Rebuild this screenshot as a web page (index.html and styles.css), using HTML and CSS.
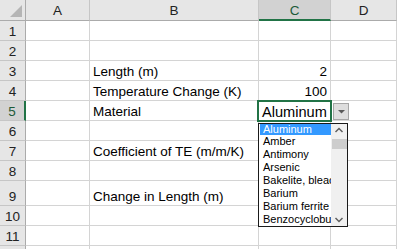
FILE: index.html
```html
<!DOCTYPE html>
<html lang="en">
<head>
  <meta charset="UTF-8">
  <title>Thermal Expansion</title>
  <link rel="stylesheet" href="styles.css">
</head>
<body>
  <div class="sheet">
    <div class="grid">
      <!-- header row -->
      <div class="corner"><span class="corner-tri"></span></div>
      <div class="col-head">A</div>
      <div class="col-head">B</div>
      <div class="col-head active">C</div>
      <div class="col-head">D</div>

      <div class="row-head">1</div><div class="cell"></div><div class="cell"></div><div class="cell"></div><div class="cell"></div>
      <div class="row-head">2</div><div class="cell"></div><div class="cell"></div><div class="cell"></div><div class="cell"></div>
      <div class="row-head">3</div><div class="cell"></div><div class="cell">Length (m)</div><div class="cell num">2</div><div class="cell"></div>
      <div class="row-head">4</div><div class="cell"></div><div class="cell">Temperature Change (K)</div><div class="cell num">100</div><div class="cell"></div>
      <div class="row-head active">5</div><div class="cell"></div><div class="cell">Material</div><div class="cell big">Aluminum</div><div class="cell"></div>
      <div class="row-head">6</div><div class="cell"></div><div class="cell"></div><div class="cell"></div><div class="cell"></div>
      <div class="row-head">7</div><div class="cell"></div><div class="cell">Coefficient of TE (m/m/K)</div><div class="cell"></div><div class="cell"></div>
      <div class="row-head">8</div><div class="cell"></div><div class="cell"></div><div class="cell"></div><div class="cell"></div>
      <div class="row-head">9</div><div class="cell"></div><div class="cell">Change in Length (m)</div><div class="cell"></div><div class="cell"></div>
      <div class="row-head">10</div><div class="cell"></div><div class="cell"></div><div class="cell"></div><div class="cell"></div>
      <div class="row-head">11</div><div class="cell"></div><div class="cell"></div><div class="cell"></div><div class="cell"></div>
      <div class="row-head"></div><div class="cell"></div><div class="cell"></div><div class="cell"></div><div class="cell"></div>
    </div>

    <!-- selected cell C5 with its validation dropdown -->
    <div class="selection"></div>
    <div class="drop-btn">
      <svg width="7" height="4" viewBox="0 0 7 4"><polygon points="0,0 7,0 3.5,3.5" fill="#595959"/></svg>
    </div>
    <div class="listbox">
      <ul class="options">
        <li class="selected">Aluminum</li>
        <li>Amber</li>
        <li>Antimony</li>
        <li>Arsenic</li>
        <li>Bakelite, bleached</li>
        <li>Barium</li>
        <li>Barium ferrite</li>
        <li>Benzocyclobutene</li>
      </ul>
      <div class="scrollbar">
        <svg class="arrow" width="16" height="10" viewBox="0 0 16 10"><polyline points="4.5,7 8,3.5 11.5,7" fill="none" stroke="#606060" stroke-width="1.5"/></svg>
        <div class="thumb"></div>
        <svg class="arrow down" width="16" height="10" viewBox="0 0 16 10"><polyline points="4.5,3 8,6.5 11.5,3" fill="none" stroke="#606060" stroke-width="1.5"/></svg>
      </div>
    </div>
  </div>
</body>
</html>
```

FILE: styles.css
```css
body {
  margin: 0;
  background: #ffffff;
  font-family: 'Liberation Sans', Arial, sans-serif;
  color: #000;
}
.sheet {
  position: relative;
  width: 397px;
  height: 249px;
  overflow: hidden;
}
.grid {
  display: grid;
  grid-template-columns: 26px 64px 169px 72px 66px;
  grid-template-rows: 21px repeat(8, 20px) 25px 20px 20px 20px;
}
.grid > div {
  box-sizing: border-box;
  border-right: 1px solid #d4d4d4;
  border-bottom: 1px solid #d4d4d4;
}
.corner {
  position: relative;
  background: #e6e6e6;
  border-right-color: #ababab !important;
  border-bottom-color: #ababab !important;
}
.corner-tri {
  position: absolute;
  right: 3px;
  bottom: 3px;
  width: 0;
  height: 0;
  border-left: 12px solid transparent;
  border-bottom: 12px solid #b5b5b5;
}
.col-head {
  background: #e6e6e6;
  border-right-color: #c6c6c6 !important;
  border-bottom-color: #ababab !important;
  font-size: 13.5px;
  color: #222;
  display: flex;
  align-items: center;
  justify-content: center;
  padding-top: 1px;
}
.col-head.active {
  background: #d2d2d2;
  color: #1d5a38;
  border-bottom: 2px solid #217346 !important;
}
.row-head {
  background: #e6e6e6;
  border-right-color: #ababab !important;
  border-bottom-color: #c6c6c6 !important;
  font-size: 13.5px;
  color: #222;
  display: flex;
  align-items: flex-end;
  justify-content: center;
  padding-bottom: 1px;
}
.row-head.active {
  background: #d2d2d2;
  color: #1d5a38;
  border-right: 2px solid #217346 !important;
}
.cell {
  font-size: 13.5px;
  display: flex;
  align-items: flex-end;
  padding: 0 3px 1px;
  white-space: nowrap;
  overflow: visible;
}
.cell.num {
  justify-content: flex-end;
}
.cell.big {
  font-size: 14.6px;
  padding-left: 3px;
  padding-bottom: 0;
}
.selection {
  position: absolute;
  left: 257px;
  top: 100px;
  width: 75px;
  height: 22px;
  box-sizing: border-box;
  border: 2px solid #217346;
}
.drop-btn {
  position: absolute;
  left: 333px;
  top: 103px;
  width: 16px;
  height: 17px;
  box-sizing: border-box;
  background: #dedede;
  border: 1px solid #a6a6a6;
  display: flex;
  align-items: center;
  justify-content: center;
}
.listbox {
  position: absolute;
  left: 258px;
  top: 123px;
  width: 90px;
  height: 104px;
  box-sizing: border-box;
  border: 1px solid #1a1a1a;
  background: #fff;
  display: flex;
}
.options {
  list-style: none;
  margin: 0;
  padding: 0;
  flex: 1;
  overflow: hidden;
  font-size: 11px;
}
.options li {
  height: 13px;
  line-height: 13px;
  padding-left: 4px;
  white-space: nowrap;
  overflow: hidden;
}
.options li.selected {
  height: 11px;
  line-height: 11px;
  margin-left: 1px;
  padding-left: 3px;
  background: #3399ff;
  color: #fff;
}
.scrollbar {
  width: 16px;
  background: #f0f0f0;
  display: flex;
  flex-direction: column;
  align-items: center;
}
.arrow {
  display: block;
  margin-top: 1px;
}
.arrow.down {
  margin-top: auto;
  margin-bottom: 1px;
}
.thumb {
  width: 15px;
  height: 10px;
  margin-top: 4px;
  background: #cdcdcd;
}
```
